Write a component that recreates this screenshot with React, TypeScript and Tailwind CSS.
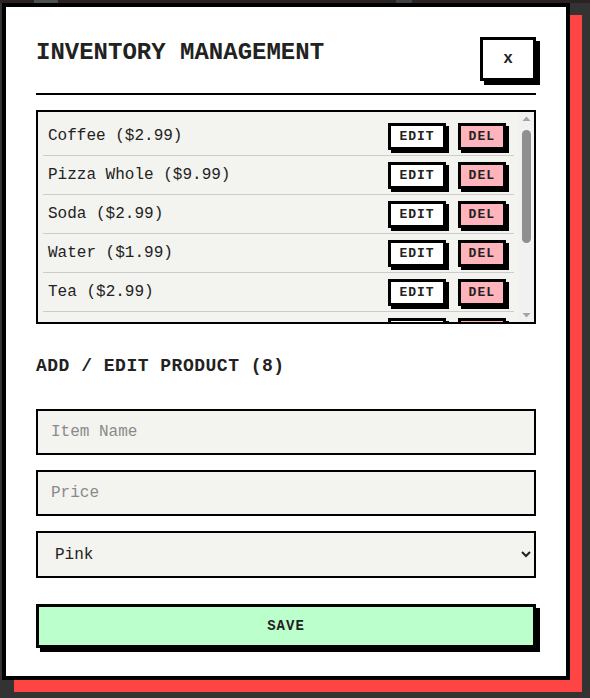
import { useState } from 'react';

type Product = { name: string; price: number };

const products: Product[] = [
    { name: 'Coffee', price: 2.99 },
    { name: 'Pizza Whole', price: 9.99 },
    { name: 'Soda', price: 2.99 },
    { name: 'Water', price: 1.99 },
    { name: 'Tea', price: 2.99 },
    { name: 'Burger', price: 5.99 },
    { name: 'Fries', price: 3.49 },
    { name: 'Cookie', price: 1.49 },
];

const mono = "font-['Courier_New','Liberation_Mono',monospace]";

// classic scrollbar look, drawn beside the list
function ScrollBar() {
    return (
        <div className="flex w-[15px] shrink-0 flex-col items-center bg-[#f1f1f1]">
            <svg width="15" height="14" viewBox="0 0 15 14" className="shrink-0">
                <path d="M3.5 9 L7.5 4.5 L11.5 9 Z" fill="#a3a3a3" />
            </svg>
            <div className="mt-[4px] h-[113px] w-[9px] rounded-full bg-[#8f8f8f]" />
            <div className="flex-1" />
            <svg width="15" height="14" viewBox="0 0 15 14" className="shrink-0">
                <path d="M3.5 5 L7.5 9.5 L11.5 5 Z" fill="#a3a3a3" />
            </svg>
        </div>
    );
}

export default function App() {
    const [color, setColor] = useState('Pink');

    return (
        <div className={`min-h-screen bg-[#333] ${mono} text-[#222]`}>
            {/* dim page behind the overlay */}
            <div className="flex h-[3px] bg-[#2b2222]">
                <div className="ml-[34px] w-[24px] bg-[#4a4f4f]" />
                <div className="ml-[338px] w-[16px] bg-[#3d4148]" />
            </div>

            <div className="pl-[2px]">
                <div className="w-[568px] border-4 border-black bg-white px-[30px] pt-[30px] pb-[28px] shadow-[12px_12px_0_#ff4444]">
                    <div className="flex items-start justify-between border-b-2 border-black pb-[12px] mb-[15px]">
                        <h1 className="text-[24px] font-bold leading-[27px] pt-[2px] text-[#222]">INVENTORY MANAGEMENT</h1>
                        <button className="h-[44px] w-[56px] border-[3px] border-black bg-white text-[16px] font-bold shadow-[4px_4px_0_#000]">
                            x
                        </button>
                    </div>

                    <div className="flex h-[214px] border-2 border-black bg-[#f3f3ef]">
                        <div className="flex-1 overflow-y-auto px-[5px] pt-[5px] pb-[5px] [scrollbar-width:none]">
                            {products.map((p) => (
                                <div key={p.name} className="flex h-[39px] items-center justify-between border-b border-[#ccc] pl-[5px] pr-[8px]">
                                    <span className="text-[16px]">
                                        {p.name} (${p.price.toFixed(2)})
                                    </span>
                                    <div className="flex gap-[12px]">
                                        <button className="h-[27px] border-[3px] border-black bg-white px-2 text-[13px] font-bold tracking-[1px] leading-none shadow-[3px_3px_0_#000]">
                                            EDIT
                                        </button>
                                        <button className="h-[27px] border-[3px] border-black bg-[#ffb3ba] px-2 text-[13px] font-bold tracking-[1px] leading-none shadow-[3px_3px_0_#000]">
                                            DEL
                                        </button>
                                    </div>
                                </div>
                            ))}
                        </div>
                        <ScrollBar />
                    </div>

                    <h2 className="mt-[31px] mb-[32px] text-[18px] font-bold leading-[22px] tracking-[0.5px]">ADD / EDIT PRODUCT (8)</h2>

                    <div className="flex flex-col gap-[15px]">
                        <input
                            placeholder="Item Name"
                            className="h-[46px] border-2 border-black bg-[#f3f3ef] px-[13px] text-[16px] outline-none placeholder:text-[#8a8a8a]"
                        />
                        <input
                            placeholder="Price"
                            className="h-[46px] border-2 border-black bg-[#f3f3ef] px-[13px] text-[16px] outline-none placeholder:text-[#8a8a8a]"
                        />
                        <select
                            value={color}
                            onChange={(e) => setColor(e.target.value)}
                            className="h-[47px] border-2 border-black bg-[#f3f3ef] px-[13px] text-[16px] outline-none"
                        >
                            <option>Pink</option>
                            <option>Green</option>
                            <option>Blue</option>
                            <option>Yellow</option>
                        </select>
                    </div>

                    <button className="mt-[26px] h-[44px] w-full border-[3px] border-black bg-[#bbffcc] text-[14px] font-bold tracking-[1px] shadow-[4px_4px_0_#000]">
                        SAVE
                    </button>
                </div>
            </div>
        </div>
    );
}
